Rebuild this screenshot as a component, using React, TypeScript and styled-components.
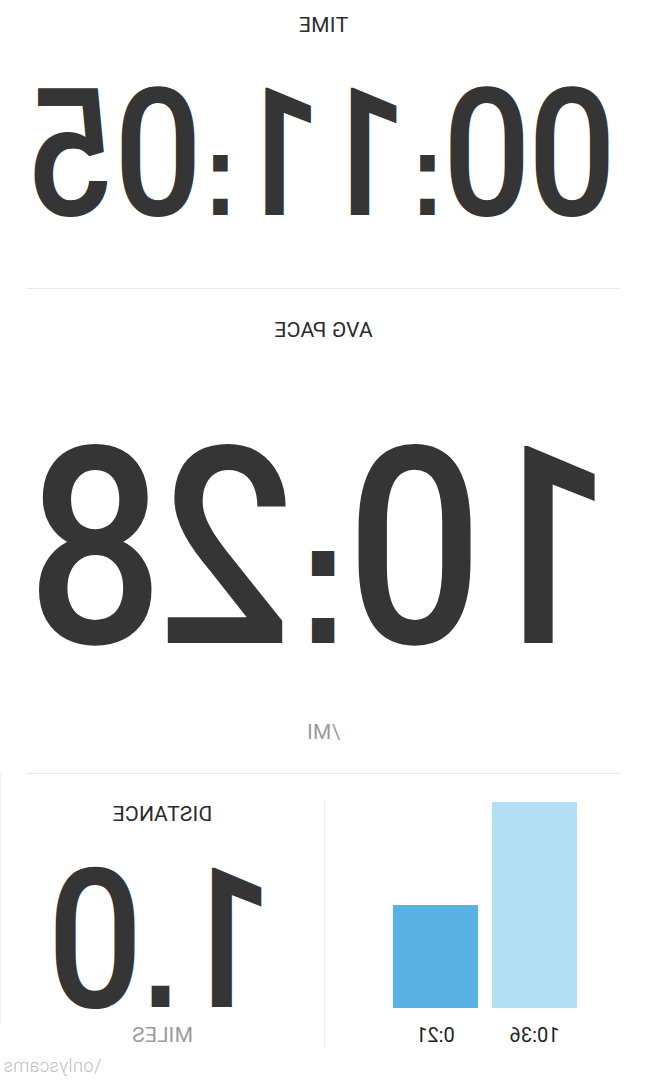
import { memo } from 'react';
import styled, { createGlobalStyle } from 'styled-components';

const splits = [
  { label: '10:36', height: 206, tone: 'light' },
  { label: '0:21', height: 103, tone: 'dark' },
] as const;

// the app font draws ':' and '.' as square blocks sitting low, so they get their own span
const Digits = ({ value }: { value: string }) => (
  <>
    {value.split(/([:.])/).map((part, i) =>
      part === ':' || part === '.' ? (
        <Punct key={i} $dot={part === '.'}>
          {part}
        </Punct>
      ) : (
        part
      ),
    )}
  </>
);

export default memo(function App() {
  return (
    <>
      <GlobalStyle />
      <Page>
        <Section $top={15} $bottom={67}>
          <Label>TIME</Label>
          <BigValue $size={179} $gap={51}>
            <Digits value="00:11:05" />
          </BigValue>
        </Section>
        <Divider />
        <Section $top={31} $bottom={30}>
          <Label>AVG PACE</Label>
          <BigValue $size={276} $gap={104}>
            <Digits value="10:28" />
          </BigValue>
          <Unit $gap={70}>/MI</Unit>
        </Section>
        <Divider />
        <BottomRow>
          <ChartPanel>
            <Bars>
              {splits.map((s) => (
                <Bar key={s.label} $tone={s.tone} style={{ height: s.height }} />
              ))}
            </Bars>
            <BarLabels>
              {splits.map((s) => (
                <BarLabel key={s.label}>{s.label}</BarLabel>
              ))}
            </BarLabels>
          </ChartPanel>
          <DistancePanel>
            <Label>DISTANCE</Label>
            <BigValue $size={194} $gap={43}>
              <Digits value="1.0" />
            </BigValue>
            <Unit $gap={11}>MILES</Unit>
          </DistancePanel>
        </BottomRow>
        <Watermark>\onlyscams</Watermark>
      </Page>
    </>
  );
});

const GlobalStyle = createGlobalStyle`
  html, body {
    margin: 0;
    padding: 0;
    background: #fff;
  }
  body {
    font-family: Roboto, "Liberation Sans", sans-serif;
    color: #2b2b2b;
  }
`;

const Page = styled.div`
  position: relative;
  width: 647px;
  height: 1080px;
  overflow: hidden;
  background: #fff;
  display: flex;
  flex-direction: column;
  transform: scaleX(-1);
`;

const Section = styled.section<{ $top: number; $bottom: number }>`
  display: flex;
  flex-direction: column;
  align-items: center;
  padding: ${(p) => p.$top}px 0 ${(p) => p.$bottom}px;
`;

const Label = styled.div`
  font-size: 21px;
  line-height: 1;
  font-weight: 400;
  color: #2b2b2b;
  letter-spacing: 0.01em;
`;

const Unit = styled(Label)<{ $gap: number }>`
  margin-top: ${(p) => p.$gap}px;
  color: #9b9b9b;
`;

const BigValue = styled.div<{ $size: number; $gap: number }>`
  margin-top: ${(p) => p.$gap}px;
  font-size: ${(p) => p.$size}px;
  line-height: 0.75;
  font-weight: 500;
  letter-spacing: -0.02em;
  color: #353535;
  white-space: nowrap;
  transform: scaleX(0.87);
`;

const Punct = styled.span<{ $dot?: boolean }>`
  display: inline-block;
  line-height: 0.75;
  font-family: "Liberation Sans", Arial, sans-serif;
  font-weight: 700;
  font-size: ${(p) => (p.$dot ? '0.74em' : '0.66em')};
  letter-spacing: 0;
  margin: ${(p) => (p.$dot ? '0 0 0 0.04em' : '0 0.01em')};
`;

const Divider = styled.hr`
  margin: 0 27px;
  border: 0;
  height: 1px;
  background: #e8e8e8;
`;

const BottomRow = styled.div`
  display: flex;
  padding-top: 26px;
  border-right: 1px solid #efefef;
  height: 250px;
  box-sizing: border-box;
`;

const ChartPanel = styled.div`
  width: 323px;
  height: 248px;
  border-right: 1px solid #ececec;
  display: flex;
  flex-direction: column;
  padding-left: 70px;
  box-sizing: border-box;
`;

const Bars = styled.div`
  height: 208px;
  display: flex;
  align-items: flex-end;
  gap: 14px;
`;

const Bar = styled.div<{ $tone: 'light' | 'dark' }>`
  width: 85px;
  background: ${(p) => (p.$tone === 'light' ? '#b3def3' : '#5ab1e3')};
`;

const BarLabels = styled.div`
  display: flex;
  gap: 14px;
  margin-top: 17px;
`;

const BarLabel = styled.div`
  width: 85px;
  text-align: center;
  font-size: 20px;
  line-height: 1;
  color: #222;
`;

const DistancePanel = styled.div`
  flex: 1;
  display: flex;
  flex-direction: column;
  align-items: center;
  padding-top: 4px;
`;

const Watermark = styled.div`
  position: absolute;
  right: 3px;
  top: 1057px;
  font-size: 18px;
  font-weight: 300;
  line-height: 1;
  color: #bdbdbd;
  letter-spacing: 0.03em;
`;
